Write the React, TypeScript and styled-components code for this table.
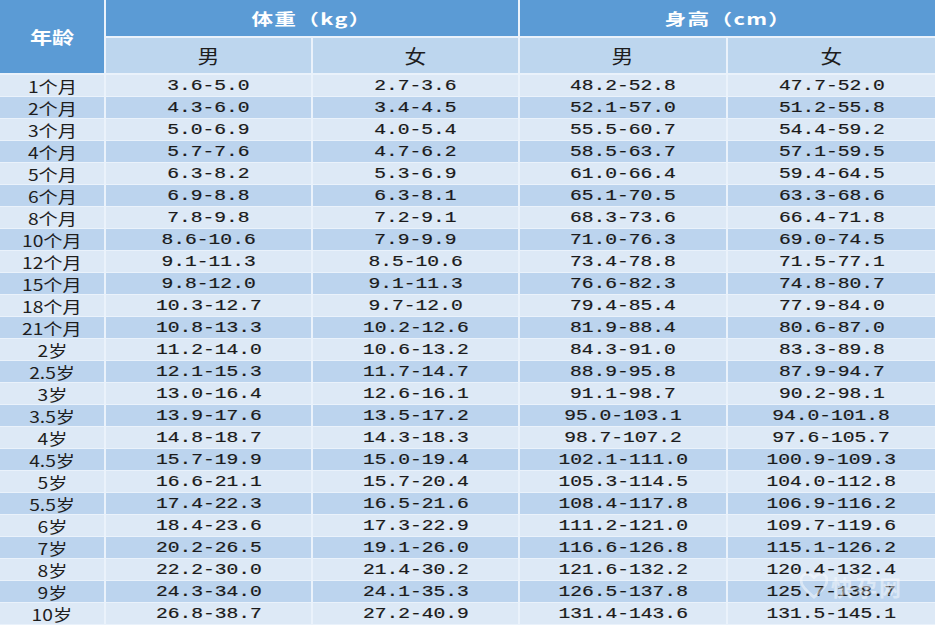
import React from "react";
import styled, { createGlobalStyle } from "styled-components";

const Global = createGlobalStyle`
  html, body { margin: 0; padding: 0; background: #eaf2fb; }
  body { width: 935px; height: 625px; overflow: hidden; }
`;

const rows: string[][] = [
  ["1个月", "3.6-5.0", "2.7-3.6", "48.2-52.8", "47.7-52.0"],
  ["2个月", "4.3-6.0", "3.4-4.5", "52.1-57.0", "51.2-55.8"],
  ["3个月", "5.0-6.9", "4.0-5.4", "55.5-60.7", "54.4-59.2"],
  ["4个月", "5.7-7.6", "4.7-6.2", "58.5-63.7", "57.1-59.5"],
  ["5个月", "6.3-8.2", "5.3-6.9", "61.0-66.4", "59.4-64.5"],
  ["6个月", "6.9-8.8", "6.3-8.1", "65.1-70.5", "63.3-68.6"],
  ["8个月", "7.8-9.8", "7.2-9.1", "68.3-73.6", "66.4-71.8"],
  ["10个月", "8.6-10.6", "7.9-9.9", "71.0-76.3", "69.0-74.5"],
  ["12个月", "9.1-11.3", "8.5-10.6", "73.4-78.8", "71.5-77.1"],
  ["15个月", "9.8-12.0", "9.1-11.3", "76.6-82.3", "74.8-80.7"],
  ["18个月", "10.3-12.7", "9.7-12.0", "79.4-85.4", "77.9-84.0"],
  ["21个月", "10.8-13.3", "10.2-12.6", "81.9-88.4", "80.6-87.0"],
  ["2岁", "11.2-14.0", "10.6-13.2", "84.3-91.0", "83.3-89.8"],
  ["2.5岁", "12.1-15.3", "11.7-14.7", "88.9-95.8", "87.9-94.7"],
  ["3岁", "13.0-16.4", "12.6-16.1", "91.1-98.7", "90.2-98.1"],
  ["3.5岁", "13.9-17.6", "13.5-17.2", "95.0-103.1", "94.0-101.8"],
  ["4岁", "14.8-18.7", "14.3-18.3", "98.7-107.2", "97.6-105.7"],
  ["4.5岁", "15.7-19.9", "15.0-19.4", "102.1-111.0", "100.9-109.3"],
  ["5岁", "16.6-21.1", "15.7-20.4", "105.3-114.5", "104.0-112.8"],
  ["5.5岁", "17.4-22.3", "16.5-21.6", "108.4-117.8", "106.9-116.2"],
  ["6岁", "18.4-23.6", "17.3-22.9", "111.2-121.0", "109.7-119.6"],
  ["7岁", "20.2-26.5", "19.1-26.0", "116.6-126.8", "115.1-126.2"],
  ["8岁", "22.2-30.0", "21.4-30.2", "121.6-132.2", "120.4-132.4"],
  ["9岁", "24.3-34.0", "24.1-35.3", "126.5-137.8", "125.7-138.7"],
  ["10岁", "26.8-38.7", "27.2-40.9", "131.4-143.6", "131.5-145.1"],
];

const Frame = styled.div`
  position: relative;
  width: 935px;
  height: 625px;
  overflow: hidden;
  background: #eaf2fb;
`;

const Table = styled.div`
  display: grid;
  grid-template-columns: 104px 205px 205px 206px 207px;
  grid-template-rows: 37px 36px repeat(25, 21px);
  column-gap: 2px;
  row-gap: 1px;
  background: #eaf2fb;
`;

const Cell = styled.div`
  display: flex;
  align-items: center;
  justify-content: center;
  white-space: nowrap;
`;

const AgeHead = styled(Cell)`
  grid-row: 1 / span 2;
  grid-column: 1;
  background: #5b9bd5;
  border-bottom: 1px solid #eaf2fb;
`;

const GroupHead = styled(Cell)<{ $col: number }>`
  grid-row: 1;
  grid-column: ${(p) => p.$col} / span 2;
  background: #5b9bd5;
  border-bottom: 1px solid #eaf2fb;
`;

const SubHead = styled(Cell)`
  grid-row: 2;
  background: #bdd6ee;
  border-bottom: 1px solid #eaf2fb;
`;

const DataCell = styled(Cell)<{ $alt: boolean }>`
  background: ${(p) => (p.$alt ? "#bcd4ee" : "#dde9f6")};
`;

const HeadText = styled.span`
  display: inline-block;
  font-family: "Noto Sans CJK SC", "Liberation Serif", serif;
  font-weight: 700;
  font-size: 16px;
  line-height: 1;
  color: #ffffff;
  transform: scaleX(1.35);
  letter-spacing: 1px;
`;

const AgeHeadText = styled(HeadText)`
  font-size: 17px;
  transform: scaleX(1.3);
  letter-spacing: 0;
`;

const SubText = styled.span`
  display: inline-block;
  font-family: "Noto Sans CJK SC", sans-serif;
  font-size: 19px;
  line-height: 1;
  color: #1e1e1e;
  transform: scaleX(1.15);
`;

const AgeText = styled.span`
  display: inline-block;
  font-family: "Noto Sans CJK SC", sans-serif;
  font-size: 16px;
  line-height: 1;
  color: #1e1e1e;
  transform: scaleX(1.2);
`;

const NumText = styled.span`
  display: inline-block;
  font-family: "Liberation Mono", "DejaVu Sans Mono", monospace;
  font-size: 14px;
  line-height: 1;
  color: #1a1a1a;
  transform: scaleX(1.4);
  -webkit-text-stroke: 0.2px #1a1a1a;
`;

const Watermark = styled.div`
  position: absolute;
  right: 32px;
  bottom: 26px;
  display: flex;
  align-items: center;
  gap: 3px;
  opacity: 0.45;
  pointer-events: none;
`;

const WatermarkText = styled.span`
  font-family: "Noto Sans CJK SC", sans-serif;
  font-size: 22px;
  line-height: 1;
  font-weight: 700;
  color: #ffffff;
  letter-spacing: 2px;
`;

export default function App() {
  return (
    <>
      <Global />
      <Frame>
        <Table>
          <AgeHead>
            <AgeHeadText>年龄</AgeHeadText>
          </AgeHead>
          <GroupHead $col={2}>
            <HeadText>体重（kg）</HeadText>
          </GroupHead>
          <GroupHead $col={4}>
            <HeadText>身高（cm）</HeadText>
          </GroupHead>
          <SubHead>
            <SubText>男</SubText>
          </SubHead>
          <SubHead>
            <SubText>女</SubText>
          </SubHead>
          <SubHead>
            <SubText>男</SubText>
          </SubHead>
          <SubHead>
            <SubText>女</SubText>
          </SubHead>
          {rows.map((r, i) =>
            r.map((v, j) => (
              <DataCell key={`${i}-${j}`} $alt={i % 2 === 1}>
                {j === 0 ? <AgeText>{v}</AgeText> : <NumText>{v}</NumText>}
              </DataCell>
            ))
          )}
        </Table>
        <Watermark>
          <svg width="28" height="26" viewBox="0 0 30 28">
            <path
              d="M15 26 C5 18 1 13 1 8 C1 4 4 1 8 1 C11 1 13 3 15 5 C17 3 19 1 22 1 C26 1 29 4 29 8 C29 13 25 18 15 26 Z"
              fill="none"
              stroke="#ffffff"
              strokeWidth="3"
            />
          </svg>
          <WatermarkText>快孕网</WatermarkText>
        </Watermark>
      </Frame>
    </>
  );
}
